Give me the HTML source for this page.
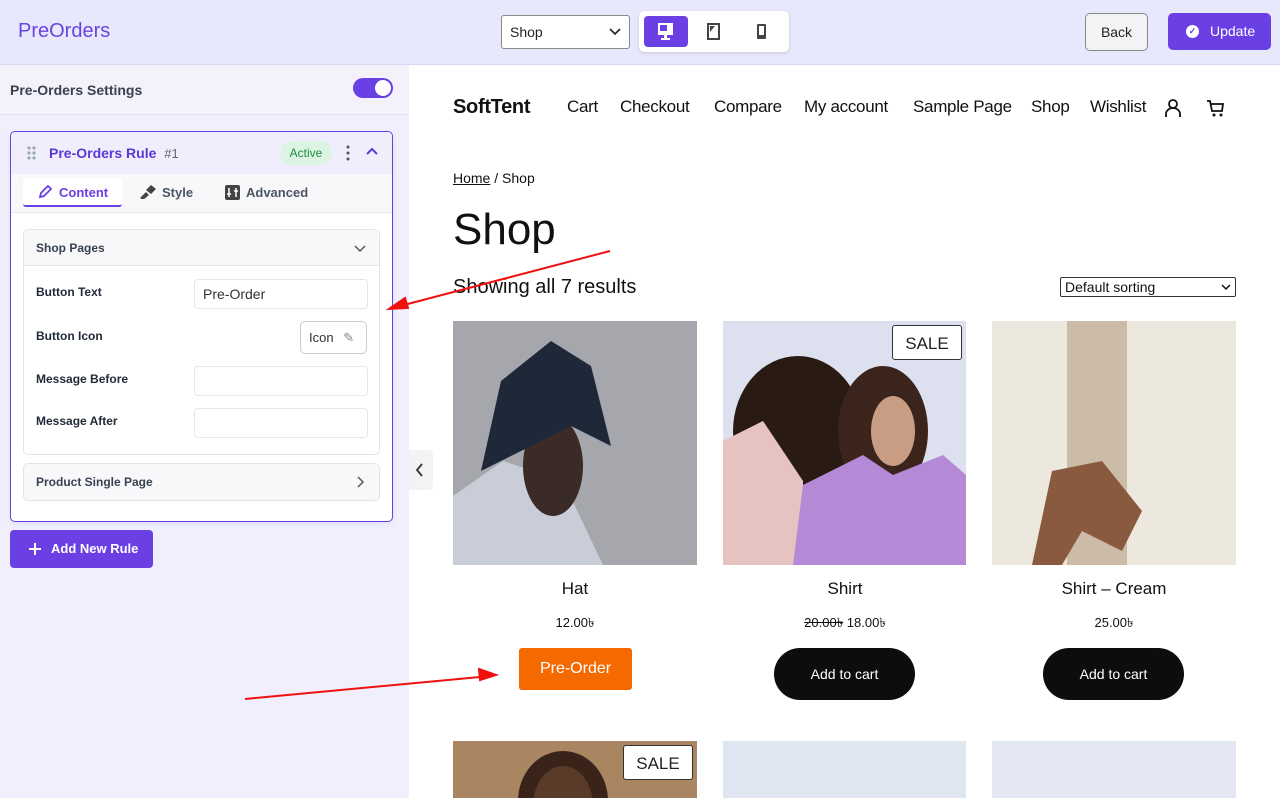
<!DOCTYPE html>
<html><head><meta charset="utf-8"><style>
*{box-sizing:border-box;margin:0;padding:0}
html,body{width:1280px;height:798px;overflow:hidden}
body{font-family:"Liberation Sans",sans-serif;background:#fff;position:relative}
.a{position:absolute}
.top{left:0;top:0;width:1280px;height:65px;background:#e8e8fc;border-bottom:1px solid #d6d6ee}
.side{left:0;top:65px;width:409px;height:733px;background:#f1effd}
.lbl{font-size:12px;font-weight:bold;color:#1f2937}
.inp{background:#fff;border:1px solid #e3e5f0;border-radius:4px;height:30px;width:174px;left:194px}
.nav{font-size:17px;color:#111;top:97px;letter-spacing:-0.3px}
.pt{font-size:17px;color:#111;text-align:center;width:244px}
.pr{font-size:13px;color:#111;text-align:center;width:244px}
.cart{background:#0d0d0d;color:#fff;font-size:14px;border-radius:26px;width:141px;height:52px;text-align:center;line-height:52px}
.sale{background:#fff;border:1px solid #333;border-radius:3px;font-size:17px;color:#222;width:70px;height:35px;text-align:center;line-height:35px}
</style></head><body>
<div class="a top"></div>
<div class="a" style="left:18px;top:20px;font-size:20px;color:#6a44e0">PreOrders</div>
<div class="a" style="left:501px;top:15px;width:129px;height:34px;background:#fff;border:1px solid #888;border-radius:3px;font-size:14px;padding:8px 8px;color:#222">Shop</div>
<svg class="a" style="left:609px;top:28px" width="12" height="8"><path d="M1 1l5 5 5-5" fill="none" stroke="#222" stroke-width="1.6"/></svg>
<div class="a" style="left:639px;top:11px;width:150px;height:41px;background:#fff;border-radius:5px;box-shadow:0 1px 3px rgba(0,0,0,.15)"></div>
<div class="a" style="left:644px;top:16px;width:44px;height:31px;background:#6a3fe4;border-radius:4px"></div>
<svg class="a" style="left:656px;top:22px" width="20" height="20" viewBox="0 0 20 20"><rect x="2" y="1" width="15" height="12" fill="#fff"/><rect x="4" y="3" width="7" height="6" fill="#6a3fe4"/><rect x="8" y="13" width="3" height="3" fill="#fff"/><rect x="5" y="16" width="9" height="2" fill="#fff"/></svg>
<svg class="a" style="left:706px;top:23px" width="16" height="18"><rect x="2" y="1" width="11" height="15" fill="none" stroke="#444" stroke-width="2"/><path d="M4 3h5l-5 6z" fill="#444"/></svg>
<svg class="a" style="left:755px;top:23px" width="14" height="18"><rect x="2" y="1" width="9" height="15" rx="1" fill="#444"/><rect x="4" y="3" width="5" height="9" fill="#fff"/></svg>
<div class="a" style="left:1085px;top:13px;width:63px;height:38px;border:1px solid #888;border-radius:5px;background:#f3f3f6;font-size:14px;text-align:center;line-height:36px;color:#222">Back</div>
<div class="a" style="left:1168px;top:13px;width:103px;height:37px;background:#6a3fe4;border-radius:5px;color:#fff;font-size:14px;line-height:37px;padding-left:42px">Update</div>
<div class="a" style="left:1186px;top:25px;width:13px;height:13px;border-radius:50%;background:#fff;color:#6a3fe4;font-size:9px;text-align:center;line-height:13px;font-weight:bold">✓</div>

<div class="a side"></div>
<div class="a" style="left:0;top:65px;width:409px;height:50px;background:#f3f2fb;border-bottom:1px solid #e2e1ee"></div>
<div class="a" style="left:10px;top:82px;font-size:14px;font-weight:bold;color:#374151">Pre-Orders Settings</div>
<div class="a" style="left:353px;top:78px;width:40px;height:20px;border-radius:10px;background:#6a3fe4"></div>
<div class="a" style="left:375px;top:80px;width:16px;height:16px;border-radius:50%;background:#fff"></div>

<div class="a" style="left:10px;top:131px;width:383px;height:391px;background:#fff;border:1px solid #6a3fe4;border-radius:5px;box-shadow:0 2px 6px rgba(0,0,0,.06)"></div>
<div class="a" style="left:11px;top:132px;width:381px;height:42px;background:#f0eefc;border-radius:5px 5px 0 0"></div>
<svg class="a" style="left:26px;top:145px" width="12" height="16"><g fill="#9aa"><circle cx="3" cy="3" r="1.6"/><circle cx="8" cy="3" r="1.6"/><circle cx="3" cy="8" r="1.6"/><circle cx="8" cy="8" r="1.6"/><circle cx="3" cy="13" r="1.6"/><circle cx="8" cy="13" r="1.6"/></g></svg>
<div class="a" style="left:49px;top:145px;font-size:14px;font-weight:bold;color:#5b37d6">Pre-Orders Rule <span style="font-weight:normal;color:#666;font-size:13px;margin-left:4px">#1</span></div>
<div class="a" style="left:280px;top:141px;width:52px;height:24px;border-radius:12px;background:#dcf5e3;color:#1f8a44;font-size:12px;text-align:center;line-height:24px">Active</div>
<svg class="a" style="left:345px;top:145px" width="6" height="16"><g fill="#555"><circle cx="3" cy="2" r="1.5"/><circle cx="3" cy="8" r="1.5"/><circle cx="3" cy="14" r="1.5"/></g></svg>
<svg class="a" style="left:366px;top:147px" width="12" height="10"><path d="M1 7l5-5 5 5" fill="none" stroke="#5b37d6" stroke-width="2"/></svg>
<div class="a" style="left:11px;top:174px;width:381px;height:39px;background:#f8f8fb;border-bottom:1px solid #e5e5ee"></div>
<div class="a" style="left:23px;top:178px;width:99px;height:29px;background:#fff;border-bottom:2px solid #6a3fe4;border-radius:3px"></div>
<svg class="a" style="left:38px;top:185px" width="14" height="14"><path d="M2 12l1-4 7-7 3 3-7 7z" fill="none" stroke="#6a3fe4" stroke-width="1.8"/></svg>
<div class="a" style="left:59px;top:185px;font-size:13px;font-weight:bold;color:#6a3fe4">Content</div>
<svg class="a" style="left:138px;top:183px" width="20" height="16"><path d="M2 15l6-6 3 3-6 5zM8 7l5-5 5 4-5 5z" fill="#444"/></svg>
<div class="a" style="left:162px;top:185px;font-size:13px;font-weight:bold;color:#4b5563">Style</div>
<svg class="a" style="left:225px;top:185px" width="15" height="15"><rect width="15" height="15" rx="2" fill="#444"/><path d="M4 3v9M11 3v9M2 9h4M9 6h4" stroke="#fff" stroke-width="1.5"/></svg>
<div class="a" style="left:246px;top:185px;font-size:13px;font-weight:bold;color:#4b5563">Advanced</div>

<div class="a" style="left:23px;top:229px;width:357px;height:226px;border:1px solid #e3e3ec;border-radius:5px;background:#fff"></div>
<div class="a" style="left:24px;top:230px;width:355px;height:36px;background:#f8f8fb;border-bottom:1px solid #e3e3ec;border-radius:5px 5px 0 0"></div>
<div class="a" style="left:36px;top:241px;font-size:12px;font-weight:bold;color:#374151">Shop Pages</div>
<svg class="a" style="left:354px;top:244px" width="12" height="9"><path d="M1 2l5 5 5-5" fill="none" stroke="#555" stroke-width="1.5"/></svg>
<div class="a lbl" style="left:36px;top:285px">Button Text</div>
<div class="a inp" style="top:279px;font-size:14px;color:#333;padding:6px 8px">Pre-Order</div>
<div class="a lbl" style="left:36px;top:329px">Button Icon</div>
<div class="a" style="left:300px;top:321px;width:67px;height:33px;border:1px solid #ccc;border-radius:5px;font-size:13px;color:#333;padding:8px 8px">Icon <span style="color:#888;margin-left:6px">✎</span></div>
<div class="a lbl" style="left:36px;top:372px">Message Before</div>
<div class="a inp" style="top:366px"></div>
<div class="a lbl" style="left:36px;top:414px">Message After</div>
<div class="a inp" style="top:408px"></div>
<div class="a" style="left:23px;top:463px;width:357px;height:38px;border:1px solid #e3e3ec;border-radius:5px;background:#f8f8fb"></div>
<div class="a" style="left:36px;top:475px;font-size:12px;font-weight:bold;color:#374151">Product Single Page</div>
<svg class="a" style="left:356px;top:476px" width="8" height="12"><path d="M2 1l5 5-5 5" fill="none" stroke="#555" stroke-width="1.5"/></svg>
<div class="a" style="left:10px;top:530px;width:143px;height:38px;background:#6a3fe4;border-radius:4px;color:#fff;font-size:13px;font-weight:bold;line-height:38px;padding-left:41px">Add New Rule</div>
<svg class="a" style="left:28px;top:542px" width="14" height="14"><path d="M7 1v12M1 7h12" stroke="#fff" stroke-width="2"/></svg>

<div class="a" style="left:409px;top:450px;width:24px;height:40px;background:#f3f3f6;border-radius:0 4px 4px 0"></div>
<svg class="a" style="left:415px;top:463px" width="10" height="14"><path d="M7 1L2 7l5 6" fill="none" stroke="#333" stroke-width="1.8"/></svg>

<div class="a" style="left:453px;top:96px;font-size:20px;font-weight:bold;color:#111;letter-spacing:-0.3px">SoftTent</div>
<div class="a nav" style="left:567px">Cart</div>
<div class="a nav" style="left:620px">Checkout</div>
<div class="a nav" style="left:714px">Compare</div>
<div class="a nav" style="left:804px">My account</div>
<div class="a nav" style="left:913px">Sample Page</div>
<div class="a nav" style="left:1031px">Shop</div>
<div class="a nav" style="left:1090px">Wishlist</div>
<svg class="a" style="left:1163px;top:98px" width="20" height="20"><circle cx="10" cy="6" r="4" fill="none" stroke="#111" stroke-width="1.8"/><path d="M3 19v-3a7 6 0 0114 0v3" fill="none" stroke="#111" stroke-width="1.8"/></svg>
<svg class="a" style="left:1206px;top:99px" width="20" height="20"><path d="M1 2h3l2 10h10l1-7H5" fill="none" stroke="#111" stroke-width="1.8"/><circle cx="8" cy="16" r="1.5" fill="#111"/><circle cx="15" cy="16" r="1.5" fill="#111"/></svg>

<div class="a" style="left:453px;top:170px;font-size:14px;color:#111"><u>Home</u> / Shop</div>
<div class="a" style="left:453px;top:205px;font-size:44px;color:#111">Shop</div>
<div class="a" style="left:453px;top:276px;font-size:20px;color:#111">Showing all 7 results</div>
<div class="a" style="left:1060px;top:277px;width:176px;height:20px;border:1px solid #333;border-radius:2px;font-size:14px;padding:1px 4px;color:#111">Default sorting</div>
<svg class="a" style="left:1221px;top:284px" width="10" height="7"><path d="M1 1l4 4 4-4" fill="none" stroke="#111" stroke-width="1.5"/></svg>

<svg class="a" style="left:453px;top:321px" width="244" height="244"><rect width="244" height="244" fill="#a6a7ad"/><path d="M0 244V175l50-35 60 20 40 84z" fill="#c9cdd8"/><ellipse cx="100" cy="145" rx="30" ry="50" fill="#3a2b26"/><path d="M28 150l20-90 50-40 40 25 20 80-40-20z" fill="#1f2838"/></svg>
<svg class="a" style="left:723px;top:321px" width="243" height="244"><rect width="243" height="244" fill="#dde0ee"/><ellipse cx="75" cy="110" rx="65" ry="75" fill="#2a1a14"/><ellipse cx="160" cy="110" rx="45" ry="65" fill="#3a241c"/><path d="M0 244V120l40-20 40 60v84z" fill="#e6c2c0"/><path d="M70 244l10-80 60-30 30 20 50-20 23 20v90z" fill="#b48ad6"/><ellipse cx="170" cy="110" rx="22" ry="35" fill="#c99c84"/></svg>
<div class="a sale" style="left:892px;top:325px">SALE</div>
<svg class="a" style="left:992px;top:321px" width="244" height="244"><rect width="244" height="244" fill="#ece8df"/><rect x="75" y="0" width="60" height="244" fill="#cbbba7"/><path d="M0 0h75v244H0zM135 0h109v244H135z" fill="#ece8dd"/><path d="M60 150l50-10 40 50-20 40-40-20-20 34H40z" fill="#8a5a3e"/></svg>

<div class="a pt" style="left:453px;top:579px">Hat</div>
<div class="a pt" style="left:723px;top:579px">Shirt</div>
<div class="a pt" style="left:992px;top:579px">Shirt – Cream</div>
<div class="a pr" style="left:453px;top:614px">12.00৳</div>
<div class="a pr" style="left:723px;top:614px"><s>20.00৳</s> 18.00৳</div>
<div class="a pr" style="left:992px;top:614px">25.00৳</div>
<div class="a" style="left:519px;top:648px;width:113px;height:42px;background:#f56a00;border-radius:3px;color:#fff;font-size:16px;text-align:center;line-height:42px">Pre-Order</div>
<div class="a cart" style="left:774px;top:648px">Add to cart</div>
<div class="a cart" style="left:1043px;top:648px">Add to cart</div>

<svg class="a" style="left:453px;top:741px" width="244" height="57"><rect width="244" height="57" fill="#a98561"/><ellipse cx="110" cy="60" rx="45" ry="50" fill="#3a2419"/><ellipse cx="110" cy="65" rx="30" ry="40" fill="#5a3a28"/></svg>
<div class="a sale" style="left:623px;top:745px">SALE</div>
<div class="a" style="left:723px;top:741px;width:243px;height:57px;background:#dfe6f2"></div>
<div class="a" style="left:992px;top:741px;width:244px;height:57px;background:#e3e7f3"></div>

<svg class="a" style="left:0;top:0" width="1280" height="798"><g stroke="#f01010" stroke-width="2" fill="#f01010"><line x1="610" y1="251" x2="400" y2="306"/><path d="M389 309l16-11 3 10z"/><line x1="245" y1="699" x2="480" y2="677"/><path d="M496 675l-17-6 1 11z"/></g></svg>
</body></html>
